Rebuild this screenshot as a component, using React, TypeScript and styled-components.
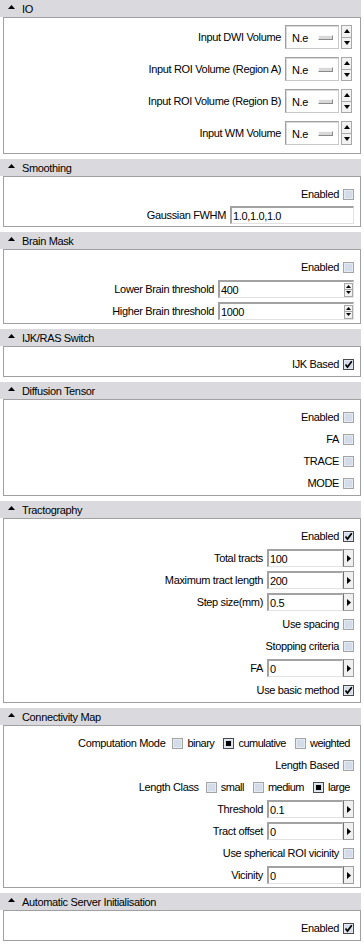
import React from "react";
import styled, { createGlobalStyle } from "styled-components";

const GlobalStyle = createGlobalStyle`
  body {
    margin: 0;
    background: #fff;
    font-family: "Liberation Sans", Arial, sans-serif;
    font-size: 11px;
    letter-spacing: -0.35px;
    color: #000;
  }
`;

const Panel = styled.div`
  width: 361px;
  display: flex;
  flex-direction: column;
  gap: 5px;
`;

const Header = styled.div`
  height: 17px;
  background: #dadade;
  display: flex;
  align-items: center;
  gap: 7px;
  padding-left: 8px;

  svg {
    margin-top: -4px;
  }
`;

const Body = styled.div<{ $io?: boolean }>`
  margin-left: 3px;
  border: 1px solid #a0a0a0;
  padding: ${(p) => (p.$io ? "7px 8px 8px 6px" : "6px 6px 1px 6px")};
  display: flex;
  flex-direction: column;
  gap: ${(p) => (p.$io ? "8px" : "0")};
`;

const Row = styled.div<{ $h?: number }>`
  height: ${(p) => p.$h ?? 22}px;
  display: flex;
  justify-content: flex-end;
  align-items: center;
  gap: 4px;
  white-space: nowrap;
`;

const Options = styled.div`
  display: flex;
  align-items: center;
  gap: 4px;
  margin-left: 3px;
  margin-right: 4px;
  letter-spacing: -0.5px;

  label + span {
    margin-left: 5px;
  }
`;

const Box = styled.span<{ $on?: boolean }>`
  width: 11px;
  height: 11px;
  box-sizing: border-box;
  border: 1px solid ${(p) => (p.$on ? "#4a4a4a" : "#a4a4a4")};
  background: #d3dce8;
  box-shadow: inset 0 0 0 1px #e4eaf2;
  display: inline-flex;
  align-items: center;
  justify-content: center;
  flex: none;
`;

const Dot = styled.span`
  width: 5px;
  height: 5px;
  background: #000;
`;

const Combo = styled.div`
  width: 54px;
  height: 24px;
  box-sizing: border-box;
  border-style: solid;
  border-width: 1px;
  border-color: #a0a0a0 #c8c8c8 #c8c8c8 #a0a0a0;
  box-shadow: inset 1px 1px 0 #d8d8d8;
  background: #fff;
  display: flex;
  align-items: center;
  justify-content: space-between;
  padding: 1px 5px 0 6px;
`;

const Indicator = styled.span`
  width: 15px;
  height: 5px;
  box-sizing: border-box;
  background: #d8d8d8;
  border-style: solid;
  border-width: 1px;
  border-color: #f8f8f8 #888 #888 #f8f8f8;
`;

const Stepper = styled.div<{ $small?: boolean }>`
  width: ${(p) => (p.$small ? 9 : 11)}px;
  height: ${(p) => (p.$small ? 14 : 24)}px;
  display: flex;
  flex-direction: column;
  margin-left: ${(p) => (p.$small ? 0 : -2)}px;
  flex: none;
`;

const StepBtn = styled.span`
  flex: 1;
  box-sizing: border-box;
  border: 1px solid #a8a8a8;
  background: #f2f2f2;
  display: flex;
  align-items: center;
  justify-content: center;

  & + & {
    border-top: none;
  }
`;

const Field = styled.div<{ $w: number }>`
  width: ${(p) => p.$w}px;
  height: 18px;
  box-sizing: border-box;
  border-style: solid;
  border-width: 2px 1px 1px 2px;
  border-color: #a2a2a2 #e2e2e2 #e2e2e2 #a2a2a2;
  background: #fff;
  display: flex;
  align-items: center;
  padding-left: 1px;
  flex: none;

  & > span:first-child {
    flex: 1;
  }
`;

const SideBtn = styled.span`
  width: 11px;
  height: 18px;
  box-sizing: border-box;
  border: 1px solid #a0a0a0;
  border-left-color: #707070;
  background: #f0f0f0;
  display: flex;
  align-items: center;
  justify-content: center;
  margin-left: -4px;
  flex: none;
`;

const Up = ({ w = 7, h = 4 }: { w?: number; h?: number }) => (
  <svg width={w} height={h}>
    <polygon points={`0,${h} ${w / 2},0 ${w},${h}`} fill="#000" />
  </svg>
);

const Down = ({ w = 7, h = 4 }: { w?: number; h?: number }) => (
  <svg width={w} height={h}>
    <polygon points={`0,0 ${w / 2},${h} ${w},0`} fill="#000" />
  </svg>
);

const Right = () => (
  <svg width={4} height={7}>
    <polygon points="0,0 4,3.5 0,7" fill="#000" />
  </svg>
);

const Check = ({ on }: { on?: boolean }) => (
  <Box $on={on}>
    {on && (
      <svg width={9} height={9}>
        <path d="M1.5 4.5 L3.5 7 L7.8 1.2" stroke="#000" strokeWidth={1.7} fill="none" />
      </svg>
    )}
  </Box>
);

const Radio = ({ on }: { on?: boolean }) => <Box $on={on}>{on && <Dot />}</Box>;

const Section = ({ title, io, children }: { title: string; io?: boolean; children: React.ReactNode }) => (
  <section>
    <Header>
      <Up />
      <span>{title}</span>
    </Header>
    <Body $io={io}>{children}</Body>
  </section>
);

const VolumeRow = ({ label }: { label: string }) => (
  <Row $h={24}>
    <span>{label}</span>
    <Combo>
      <span>N.e</span>
      <Indicator />
    </Combo>
    <Stepper>
      <StepBtn>
        <Up w={6} h={4} />
      </StepBtn>
      <StepBtn>
        <Down w={6} h={4} />
      </StepBtn>
    </Stepper>
  </Row>
);

const CheckRow = ({ label, on }: { label: string; on?: boolean }) => (
  <Row>
    <span>{label}</span>
    <Check on={on} />
  </Row>
);

const SpinRow = ({ label, value }: { label: string; value: string }) => (
  <Row>
    <span>{label}</span>
    <Field $w={136}>
      <span>{value}</span>
      <Stepper $small>
        <StepBtn>
          <Up w={5} h={3} />
        </StepBtn>
        <StepBtn>
          <Down w={5} h={3} />
        </StepBtn>
      </Stepper>
    </Field>
  </Row>
);

const ArrowRow = ({ label, value }: { label: string; value: string }) => (
  <Row>
    <span>{label}</span>
    <Field $w={76}>
      <span>{value}</span>
    </Field>
    <SideBtn>
      <Right />
    </SideBtn>
  </Row>
);

const OptionRow = ({ label, items, selected }: { label: string; items: string[]; selected: string }) => (
  <Row>
    <span>{label}</span>
    <Options>
      {items.map((it) => (
        <React.Fragment key={it}>
          <Radio on={it === selected} />
          <label>{it}</label>
        </React.Fragment>
      ))}
    </Options>
  </Row>
);

export default function App() {
  return (
    <>
      <GlobalStyle />
      <Panel>
        <Section title="IO" io>
          <VolumeRow label="Input DWI Volume" />
          <VolumeRow label="Input ROI Volume (Region A)" />
          <VolumeRow label="Input ROI Volume (Region B)" />
          <VolumeRow label="Input WM Volume" />
        </Section>

        <Section title="Smoothing">
          <CheckRow label="Enabled" />
          <Row $h={20}>
            <span>Gaussian FWHM</span>
            <Field $w={124}>
              <span>1.0,1.0,1.0</span>
            </Field>
          </Row>
        </Section>

        <Section title="Brain Mask">
          <CheckRow label="Enabled" />
          <SpinRow label="Lower Brain threshold" value="400" />
          <SpinRow label="Higher Brain threshold" value="1000" />
        </Section>

        <Section title="IJK/RAS Switch">
          <CheckRow label="IJK Based" on />
        </Section>

        <Section title="Diffusion Tensor">
          <CheckRow label="Enabled" />
          <CheckRow label="FA" />
          <CheckRow label="TRACE" />
          <CheckRow label="MODE" />
        </Section>

        <Section title="Tractography">
          <CheckRow label="Enabled" on />
          <ArrowRow label="Total tracts" value="100" />
          <ArrowRow label="Maximum tract length" value="200" />
          <ArrowRow label="Step size(mm)" value="0.5" />
          <CheckRow label="Use spacing" />
          <CheckRow label="Stopping criteria" />
          <ArrowRow label="FA" value="0" />
          <CheckRow label="Use basic method" on />
        </Section>

        <Section title="Connectivity Map">
          <OptionRow label="Computation Mode" items={["binary", "cumulative", "weighted"]} selected="cumulative" />
          <CheckRow label="Length Based" />
          <OptionRow label="Length Class" items={["small", "medium", "large"]} selected="large" />
          <ArrowRow label="Threshold" value="0.1" />
          <ArrowRow label="Tract offset" value="0" />
          <CheckRow label="Use spherical ROI vicinity" />
          <ArrowRow label="Vicinity" value="0" />
        </Section>

        <Section title="Automatic Server Initialisation">
          <CheckRow label="Enabled" on />
        </Section>
      </Panel>
    </>
  );
}
